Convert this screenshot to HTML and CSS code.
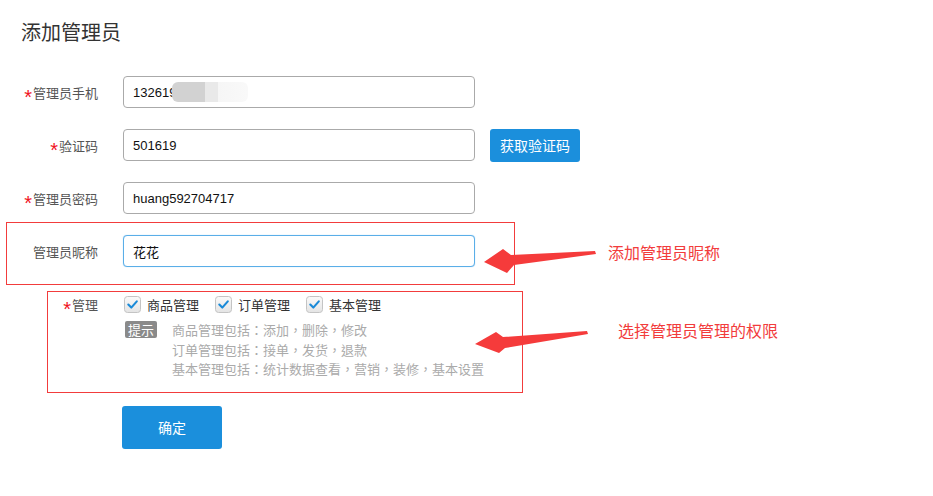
FILE: index.html
```html
<!DOCTYPE html>
<html lang="zh-CN">
<head>
<meta charset="utf-8">
<title>添加管理员</title>
<link rel="stylesheet" href="styles.css">
</head>
<body>
<div class="page">
  <h1 class="title">添加管理员</h1>
  <form class="form">
    <div class="row">
      <label class="label req">管理员手机</label>
      <div class="field">
        <input class="input" type="text" value="132619">
        <span class="mask"></span>
      </div>
    </div>
    <div class="row">
      <label class="label req">验证码</label>
      <div class="field"><input class="input" type="text" value="501619"></div>
      <button type="button" class="btn btn-code">获取验证码</button>
    </div>
    <div class="row">
      <label class="label req">管理员密码</label>
      <div class="field"><input class="input" type="text" value="huang592704717"></div>
    </div>
    <div class="row">
      <label class="label">管理员昵称</label>
      <div class="field"><input class="input input-focus" type="text" value="花花"></div>
    </div>
    <div class="row row-check">
      <label class="label req">管理</label>
      <div class="checks">
        <span class="check"><svg class="cb" viewBox="0 0 17 17" width="17" height="17"><defs><linearGradient id="g" x1="0" y1="0" x2="0" y2="1"><stop offset="0" stop-color="#fafafa"/><stop offset="1" stop-color="#e4e4e4"/></linearGradient></defs><rect x="0.5" y="0.5" width="16" height="16" rx="3" fill="url(#g)" stroke="#c4c4c4"/><path d="M4.3 8.6 L7.3 11.6 L12.8 5.4" fill="none" stroke="#1a8ad8" stroke-width="2.1" stroke-linecap="round" stroke-linejoin="round"/></svg>商品管理</span>
        <span class="check"><svg class="cb" viewBox="0 0 17 17" width="17" height="17"><rect x="0.5" y="0.5" width="16" height="16" rx="3" fill="url(#g)" stroke="#c4c4c4"/><path d="M4.3 8.6 L7.3 11.6 L12.8 5.4" fill="none" stroke="#1a8ad8" stroke-width="2.1" stroke-linecap="round" stroke-linejoin="round"/></svg>订单管理</span>
        <span class="check"><svg class="cb" viewBox="0 0 17 17" width="17" height="17"><rect x="0.5" y="0.5" width="16" height="16" rx="3" fill="url(#g)" stroke="#c4c4c4"/><path d="M4.3 8.6 L7.3 11.6 L12.8 5.4" fill="none" stroke="#1a8ad8" stroke-width="2.1" stroke-linecap="round" stroke-linejoin="round"/></svg>基本管理</span>
      </div>
    </div>
    <div class="hint">
      <span class="badge">提示</span>
      <div class="hint-lines" lang="zh-Hant">
        <p>商品管理包括：添加，删除，修改</p>
        <p>订单管理包括：接单，发货，退款</p>
        <p>基本管理包括：统计数据查看，营销，装修，基本设置</p>
      </div>
    </div>
    <div class="actions">
      <button type="button" class="btn btn-submit">确定</button>
    </div>
  </form>

  <div class="annot">
    <div class="box box-1"></div>
    <div class="box box-2"></div>
    <svg class="arrows" width="933" height="496" viewBox="0 0 933 496">
      <polygon points="484,262 503,249 511,255 595,251 596,254 514,265 507,273" fill="#f53b3b"/>
      <polygon points="475,344 496,332 503,337 587,331 588,334 505,348 499,353" fill="#f53b3b"/>
    </svg>
    <span class="note note-1">添加管理员昵称</span>
    <span class="note note-2">选择管理员管理的权限</span>
  </div>
</div>
</body>
</html>
```

FILE: styles.css
```css
* { box-sizing: border-box; }
html, body { margin: 0; padding: 0; background: #fff; }
body {
  font-family: "Noto Sans CJK SC", "Liberation Sans", sans-serif;
  color: #333;
}
.page {
  position: relative;
  width: 933px;
  height: 496px;
  padding-top: 18px;
  overflow: hidden;
}
.title {
  margin: 0 0 30px 21px;
  font-size: 20px;
  line-height: 28px;
  font-weight: normal;
  color: #333;
}
.form { margin: 0; }
.row {
  display: flex;
  align-items: center;
  height: 32px;
  margin-bottom: 21px;
}
.label {
  width: 98px;
  text-align: right;
  font-size: 13px;
  color: #555;
  line-height: 32px;
  padding-top: 2px;
  flex: none;
}
.req::before {
  content: "*";
  color: #f0141e;
  font-family: "Liberation Sans", sans-serif;
  font-size: 20px;
  line-height: 10px;
  display: inline-block;
  vertical-align: -6px;
  margin-right: 1px;
}
.field {
  position: relative;
  margin-left: 25px;
  width: 352px;
  height: 32px;
}
.input {
  width: 100%;
  height: 100%;
  border: 1px solid #aaa;
  border-radius: 4px;
  padding: 0 9px;
  font-family: "Liberation Sans", "Noto Sans CJK SC", sans-serif;
  font-size: 13px;
  color: #111;
  outline: none;
  background: #fff;
}
.input-focus {
  border-color: #5aaee8;
  box-shadow: 0 0 1px #8cc7f0;
}
.mask {
  position: absolute;
  left: 49px;
  top: 6px;
  width: 76px;
  height: 20px;
  border-radius: 6px;
  background: linear-gradient(to right, #d2d2d2 0, #d2d2d2 33px, #e9e9e9 33px, #e9e9e9 46px, #f6f6f6 46px, #f9f9f9 100%);
}
.btn {
  border: none;
  border-radius: 3px;
  background: #1b8fdc;
  color: #fff;
  font-family: "Noto Sans CJK SC", sans-serif;
  cursor: pointer;
  padding: 0;
}
.btn-code {
  margin-left: 15px;
  width: 90px;
  height: 33px;
  font-size: 14px;
}
.row-check {
  align-items: flex-start;
  height: 17px;
  margin-top: 29px;
  margin-bottom: 8px;
}
.row-check .label {
  line-height: 17px;
  padding-top: 0;
}
.checks {
  display: flex;
  margin-left: 26px;
  gap: 16px;
}
.check {
  display: flex;
  align-items: center;
  font-size: 13px;
  color: #333;
  line-height: 17px;
}
.cb {
  display: block;
  margin-right: 6px;
}
.hint {
  display: flex;
  align-items: flex-start;
  margin-left: 125px;
}
.badge {
  flex: none;
  width: 32px;
  height: 17px;
  line-height: 17px;
  text-align: center;
  font-size: 13px;
  color: #fff;
  background: #8a8a8a;
  border-radius: 2px;
}
.hint-lines {
  margin-left: 15px;
  margin-top: -1px;
}
.hint-lines p {
  margin: 0;
  font-family: "Noto Sans CJK TC", "Noto Sans CJK SC", sans-serif;
  font-size: 13px;
  line-height: 19.5px;
  color: #aaa;
}
.actions {
  margin-top: 27px;
  margin-left: 122px;
}
.btn-submit {
  width: 100px;
  height: 43px;
  font-size: 14px;
}
.annot {
  position: absolute;
  left: 0;
  top: 0;
  width: 933px;
  height: 496px;
  pointer-events: none;
}
.box {
  position: absolute;
  border: 1px solid #f23c3c;
}
.box-1 { left: 6px; top: 222px; width: 509px; height: 63px; }
.box-2 { left: 47px; top: 291px; width: 476px; height: 102px; }
.arrows { position: absolute; left: 0; top: 0; }
.note {
  position: absolute;
  font-size: 16px;
  line-height: 20px;
  color: #f23c3c;
}
.note-1 { left: 608px; top: 242px; }
.note-2 { left: 618px; top: 320px; }
```
